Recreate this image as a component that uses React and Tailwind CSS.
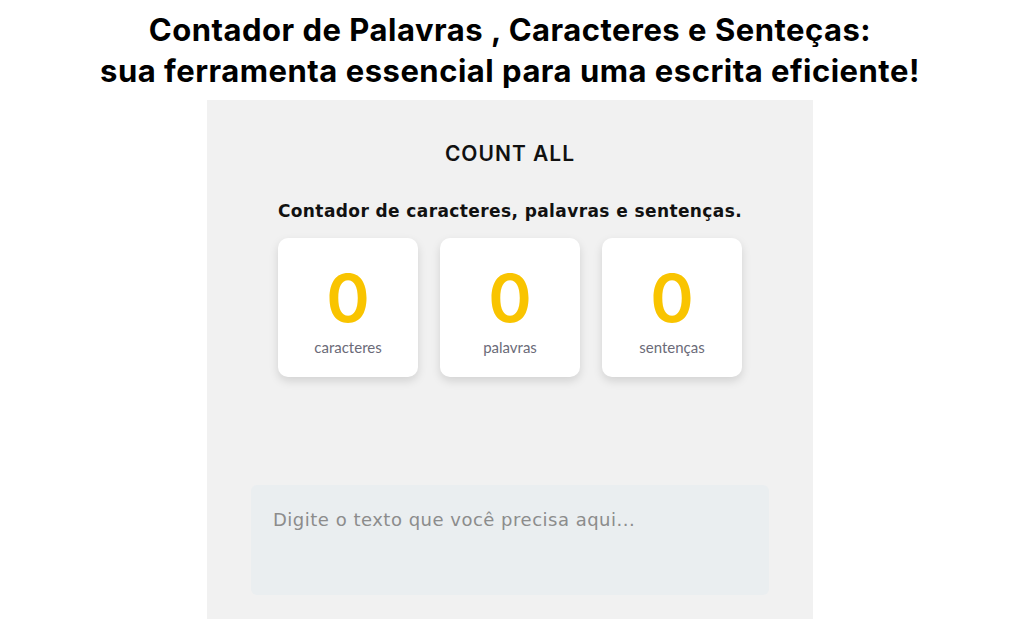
import React, { useState } from 'react'

const COUNTERS = [
    { key: 'chars', label: 'caracteres' },
    { key: 'words', label: 'palavras' },
    { key: 'sentences', label: 'sentenças' },
]

const CounterCard = ({ value, label }) => (
    <div className="w-[140px] h-[139px] bg-white rounded-[10px] shadow-[0_4px_10px_rgba(0,0,0,0.13)] flex flex-col items-center">
        <span className="mt-[28px] text-[66px] leading-[64px] font-semibold text-[#f9c400] font-['Inter',sans-serif]">{value}</span>
        <span className="mt-[9px] text-[15px] leading-[16px] text-[#6b6b78] font-['Lato',sans-serif]">{label}</span>
    </div>
)

export default function App() {
    const [text, setText] = useState('')

    const counts = {
        chars: text.length,
        words: text.trim() ? text.trim().split(/\s+/).length : 0,
        sentences: text.split(/[.!?]+/).filter(s => s.trim()).length,
    }

    return (
        <div className="w-[1020px] h-[638px] bg-white flex flex-col items-center overflow-hidden">
            {/* headline */}
            <h1 className="mt-[9px] text-center text-[31px] leading-[41px] tracking-[0.5px] font-bold text-black font-['Inter',sans-serif]">
                Contador de Palavras , Caracteres e Senteças:<br />
                sua ferramenta essencial para uma escrita eficiente!
            </h1>

            {/* counter panel */}
            <div className="mt-[9px] w-[606px] h-[519px] bg-[#f1f1f1] flex flex-col items-center">
                <h2 className="mt-[42px] text-[21px] leading-[24px] tracking-[1px] font-semibold text-[#111] font-['Inter',sans-serif]">COUNT ALL</h2>
                <p className="mt-[34px] text-[17px] leading-[22px] tracking-[0.4px] font-semibold text-[#111] font-['DejaVu_Sans',sans-serif]">
                    Contador de caracteres, palavras e sentenças.
                </p>
                <div className="mt-[16px] flex gap-[22px]">
                    {COUNTERS.map(c => (
                        <CounterCard key={c.key} value={counts[c.key]} label={c.label} />
                    ))}
                </div>
                <textarea
                    value={text}
                    onChange={e => setText(e.target.value)}
                    placeholder="Digite o texto que você precisa aqui..."
                    className="mt-[108px] w-[518px] h-[110px] resize-none rounded-[6px] bg-[#eaeef0] px-[22px] pt-[22px] text-[18px] leading-[26px] tracking-[0.5px] text-[#444] placeholder:text-[#8c8c8c] outline-none font-['DejaVu_Sans',sans-serif]"
                />
            </div>
        </div>
    )
}
